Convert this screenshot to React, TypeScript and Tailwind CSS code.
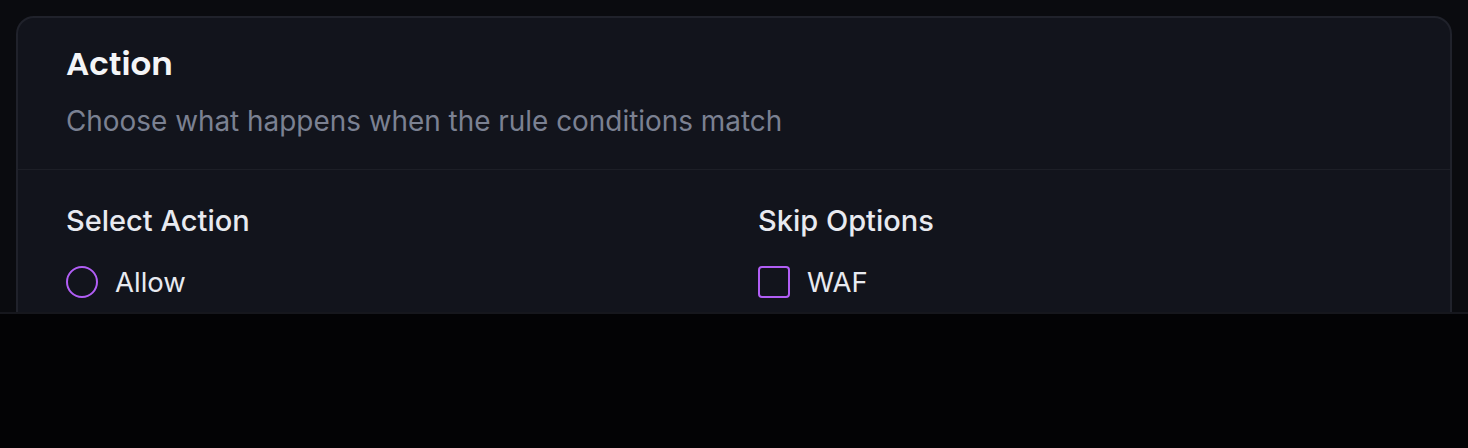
import React from "react";

export default function App() {
  return (
    <div className="w-[1468px] h-[448px] bg-[#030305] font-['Inter',sans-serif]">
      <div className="h-[312px] overflow-hidden bg-[#0a0b0f] px-4 pt-4">
        <div className="rounded-[18px] border-2 border-[#20222b] bg-[#12141c]">
          <div className="px-12 pt-[22px] pb-[28px] border-b border-[#1d1f27]">
            <h2 className="text-[32.5px] leading-[48px] font-semibold text-[#f4f5f7] font-['Poppins','Inter',sans-serif]">
              Action
            </h2>
            <p className="mt-[13px] text-[27.9px] leading-[40px] text-[#7b8192]">
              Choose what happens when the rule conditions match
            </p>
          </div>
          <div className="px-12 pt-[30px] pb-12 grid grid-cols-2 gap-12">
            <div>
              <div className="text-[29px] leading-[42px] font-medium text-[#e8eaf0]">Select Action</div>
              <label className="mt-[20px] flex items-center gap-[17px]">
                <span className="w-8 h-8 rounded-full border-2 border-[#b15ef5]" />
                <span className="text-[27.5px] leading-[40px] text-[#e8eaf0]">Allow</span>
              </label>
            </div>
            <div>
              <div className="text-[29px] leading-[42px] font-medium text-[#e8eaf0]">Skip Options</div>
              <label className="mt-[20px] flex items-center gap-[17px]">
                <span className="w-8 h-8 rounded-[4px] border-2 border-[#b15ef5]" />
                <span className="text-[27.5px] leading-[40px] text-[#e8eaf0]">WAF</span>
              </label>
            </div>
          </div>
        </div>
      </div>
      <div className="h-[136px] border-t-2 border-[#16171d] bg-[#030305]" />
    </div>
  );
}
